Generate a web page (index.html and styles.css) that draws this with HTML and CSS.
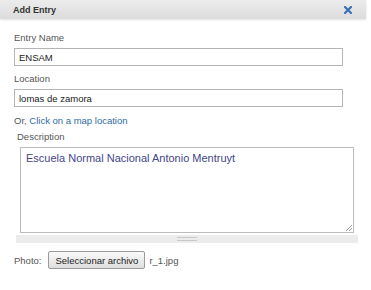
FILE: index.html
```html
<!DOCTYPE html>
<html lang="en">
<head>
  <meta charset="UTF-8">
  <title>Add Entry</title>
  <link rel="stylesheet" href="styles.css">
</head>
<body>
  <div class="dialog">
    <div class="titlebar">
      <span class="title">Add Entry</span>
      <span class="close">
        <svg width="8" height="8" viewBox="0 0 8 8"><path d="M1 1L7 7M7 1L1 7" stroke="#3b6fb6" stroke-width="2.2" stroke-linecap="square"/></svg>
      </span>
    </div>

    <div class="content">
      <div class="field">
        <label>Entry Name</label>
        <input type="text" class="text-input" value="ENSAM">
      </div>
      <div class="field">
        <label>Location</label>
        <input type="text" class="text-input" value="lomas de zamora">
      </div>
      <p class="map-line">Or, <a class="map-link">Click on a map location</a></p>

      <!-- Описание с ресайзом -->
      <div class="desc">
        <label>Description</label>
        <div class="editor">Escuela Normal Nacional Antonio Mentruyt<span class="resize"></span></div>
        <div class="grip-bar"><span class="grip"></span></div>
      </div>

      <div class="photo-row">
        <span>Photo:</span>
        <span class="file-btn">Seleccionar archivo</span>
        <span>r_1.jpg</span>
      </div>
    </div>
  </div>
</body>
</html>
```

FILE: styles.css
```css
body { margin:0; background:#fff; font-family:'Liberation Sans', Arial, sans-serif; color:#444; }

.dialog { width:366px; }

.titlebar { height:19px; display:flex; align-items:center; justify-content:space-between; padding:0 13px; background:linear-gradient(#ececec, #dcdcdc); box-shadow:0 1px 2px rgba(0,0,0,0.12); }
.title { font-size:9px; font-weight:bold; color:#333; }
.close { display:flex; margin-right:1px; margin-top:1px; }

.content { padding:13px 0 0 14px; }

.field { margin-bottom:7px; }
.field label { display:block; font-size:9.5px; line-height:12px; color:#555; margin-bottom:4px; }
.text-input { display:block; box-sizing:border-box; width:329px; height:18px; margin:0; padding:0 4px; border:1px solid #b5b5b5; font-family:inherit; font-size:9.5px; color:#222; outline:none; }

.map-line { margin:8px 0 0; font-size:9.5px; line-height:12px; color:#555; }
.map-link { color:#2e6da4; cursor:pointer; }

.desc { margin:4px 0 0 2px; width:342px; }
.desc label { display:block; font-size:9.5px; line-height:12px; color:#555; margin:0 0 4px 1px; }
.editor { position:relative; box-sizing:border-box; height:86px; margin:0 4px; padding:4px 5px; border:1px solid #bbb; font-size:11px; color:#45468c; }
.resize { position:absolute; right:1px; bottom:1px; width:6px; height:6px; background:linear-gradient(135deg, transparent 45%, #999 45%, #999 55%, transparent 55%, transparent 70%, #999 70%, #999 80%, transparent 80%); }
.grip-bar { height:8px; margin-top:2px; background:#ececec; display:flex; justify-content:center; align-items:center; }
.grip { width:20px; height:2px; border-top:1px solid #c8c8c8; border-bottom:1px solid #c8c8c8; }

.photo-row { display:flex; align-items:center; gap:4px; margin-top:8px; font-size:9.5px; color:#555; }
.file-btn { box-sizing:border-box; height:18px; display:flex; align-items:center; padding:0 6px; border:1px solid #9a9a9a; border-radius:2px; background:linear-gradient(#fafafa, #dedede); color:#222; margin-left:3px; }
```
